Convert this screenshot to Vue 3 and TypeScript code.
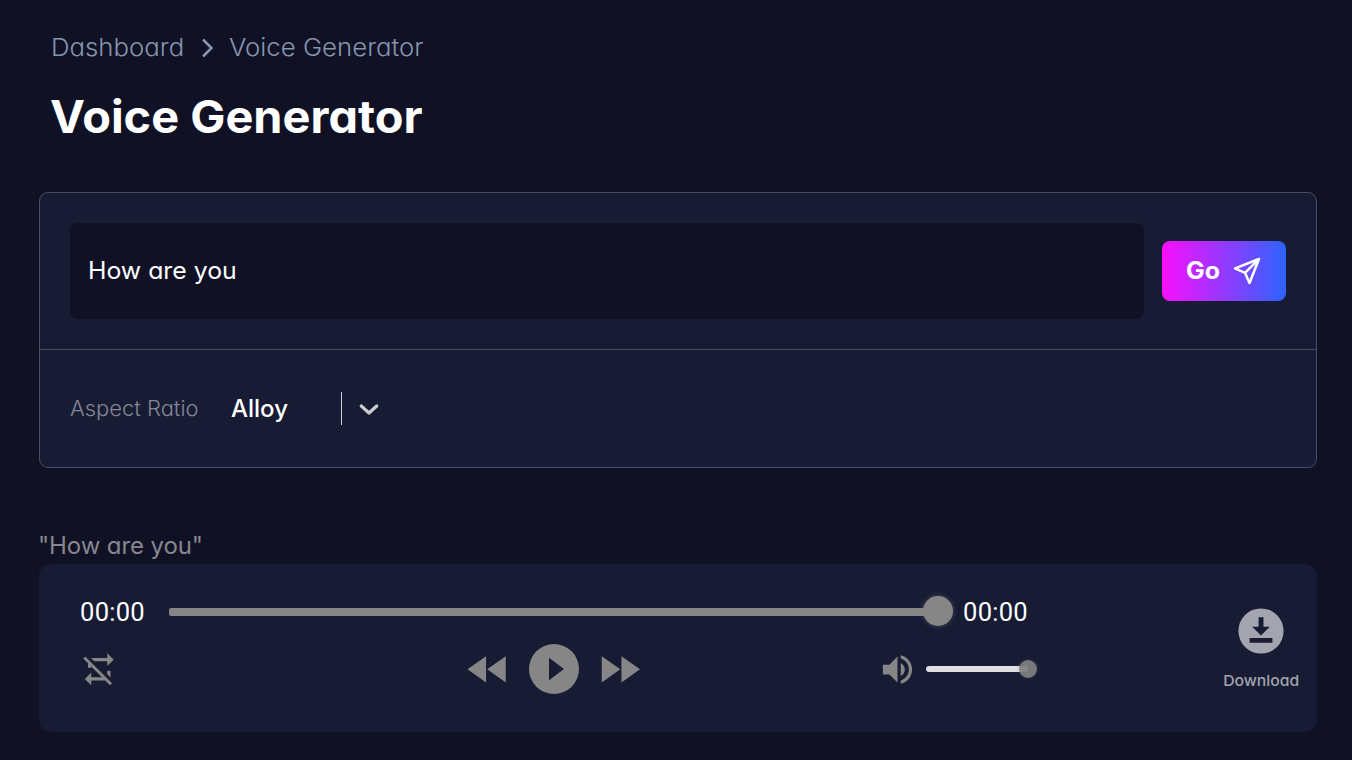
<script setup lang="ts">
import { ref } from 'vue'

const crumbs = ['Dashboard', 'Voice Generator']
const prompt = ref('How are you')
const voice = ref('Alloy')
const time = '00:00'
</script>

<template>
  <main class="page">
    <nav class="crumbs">
      <span class="crumb-first">{{ crumbs[0] }}</span>
      <svg class="crumb-arrow" width="14" height="22" viewBox="0 0 14 22"><path d="M2 2.5 10.5 11 2 19.5" /></svg>
      <span class="crumb-last">{{ crumbs[1] }}</span>
    </nav>
    <h1>Voice Generator</h1>

    <section class="panel">
      <div class="prompt-row">
        <div class="field"><span class="prompt">{{ prompt }}</span></div>
        <button class="go">
          <span>Go</span>
          <svg width="28" height="28" viewBox="0 0 28 28">
            <path d="M26 2 2 11.4l10 4.4L16.5 26 26 2ZM26 2 12 15.8" />
          </svg>
        </button>
      </div>
      <div class="options">
        <span class="label">Aspect Ratio</span>
        <span class="voice">{{ voice }}</span>
        <i class="divider"></i>
        <svg class="chevron" width="20" height="12" viewBox="0 0 20 12"><path d="M2.3 2 10 9 17.7 2" /></svg>
      </div>
    </section>

    <p class="quote">"{{ prompt }}"</p>

    <section class="result">
      <div class="player">
        <div class="seek">
          <span class="time">{{ time }}</span>
          <div class="track"><i class="knob"></i></div>
          <span class="time">{{ time }}</span>
        </div>
        <div class="controls">
          <svg class="loop" width="38.5" height="38.5" viewBox="0 0 24 24">
            <path d="M2,5.27L3.28,4L20,20.72L18.73,22L15.73,19H7V22L3,18L7,14V17H13.73L7,10.27V11H5V8.27L2,5.27M17,13H19V17.18L17,15.18V13M17,5V2L21,6L17,10V7H8.82L6.82,5H17Z" />
          </svg>
          <svg class="rewind" width="52.5" height="52.5" viewBox="0 0 24 24">
            <path d="M11.5,12L20,18V6M11,18V6L2.5,12L11,18Z" />
          </svg>
          <svg class="play" width="60" height="60" viewBox="0 0 24 24">
            <path fill-rule="evenodd" d="M12 2a10 10 0 1 0 0 20a10 10 0 1 0 0-20ZM10 7.5v9l6-4.5Z" />
          </svg>
          <svg class="forward" width="52.5" height="52.5" viewBox="0 0 24 24">
            <path d="M13,6V18L21.5,12M4,18L12.5,12L4,6V18Z" />
          </svg>
          <svg class="volume" width="39" height="39" viewBox="0 0 24 24">
            <path d="M14,3.23V5.29C16.89,6.15 19,8.83 19,12C19,15.17 16.89,17.84 14,18.7V20.77C18,19.86 21,16.28 21,12C21,7.72 18,4.14 14,3.23M16.5,12C16.5,10.23 15.5,8.71 14,7.97V16C15.5,15.29 16.5,13.76 16.5,12M3,9V15H7L12,20V4L7,9H3Z" />
          </svg>
          <div class="level"><i class="level-knob"></i></div>
        </div>
      </div>
      <div class="download">
        <svg width="46" height="46" viewBox="0 0 46 46">
          <circle cx="23" cy="23" r="22.6" />
          <path d="M20.6 9.2h4.9v9.6h6.3L23 27.4l-8.8-8.6h6.4ZM11.6 30h22.8v4.7H11.6Z" />
        </svg>
        <span>Download</span>
      </div>
    </section>
  </main>
</template>

<style>
body {
  margin: 0;
  background: #101125;
}
</style>

<style scoped>
.page {
  box-sizing: border-box;
  height: 760px;
  overflow: hidden;
  padding: 30px 35px 0 39px;
  background: #101125;
  color: #fff;
  font-family: Inter, "Open Sans", sans-serif;
  font-feature-settings: "cv11";
}
span { white-space: nowrap; }
svg { display: block; flex: none; }
.crumbs {
  display: flex;
  align-items: center;
  height: 35px;
  padding-left: 12px;
  font-size: 24px;
  font-weight: 300;
  color: #8696ae;
}
.crumb-first, .crumb-last {
  transform: scaleX(1.074);
  transform-origin: left;
}
.crumb-first { width: 150px; }
.crumb-last { margin-left: 14px; }
.crumb-arrow { margin-top: 1px; }
.crumb-arrow path { fill: none; stroke: #8696ae; stroke-width: 2.5; }
h1 {
  margin: 17px 0 0 11px;
  height: 70px;
  line-height: 70px;
  font-size: 45px;
  font-weight: 650;
  white-space: nowrap;
  transform: scaleX(1.042);
  transform-origin: left;
}
.panel {
  box-sizing: border-box;
  height: 276px;
  margin-top: 40px;
  border: 1px solid #464e61;
  border-radius: 9px;
  background: #171b34;
}
.prompt-row {
  display: flex;
  align-items: center;
  justify-content: space-between;
  height: 156px;
  padding: 0 30px;
  border-bottom: 1px solid #464e61;
}
.field {
  display: flex;
  align-items: center;
  box-sizing: border-box;
  width: 1074px;
  height: 96px;
  padding: 0 0 2px 18px;
  border-radius: 8px;
  background: #101125;
  font-size: 24px;
  font-weight: 420;
}
.prompt {
  transform: scaleX(1.034);
  transform-origin: left;
}
.go {
  display: flex;
  align-items: center;
  width: 124px;
  height: 60px;
  padding: 0 0 0 24px;
  border: 0;
  border-radius: 8px;
  background: linear-gradient(90deg, #fa0fff, #2d64ff);
  color: #fff;
  font: 700 24px Inter, sans-serif;
}
.go span {
  width: 47px;
  margin-top: -1px;
  text-align: left;
  transform: scaleX(1.04);
  transform-origin: left;
}
.go path { fill: none; stroke: #fff; stroke-width: 2.5; stroke-linejoin: round; }
.options {
  display: flex;
  align-items: center;
  height: 117px;
  padding-left: 30px;
}
.label {
  width: 161px;
  font-size: 21px;
  font-weight: 300;
  color: #858794;
  transform: scaleX(1.045);
  transform-origin: left;
}
.voice { width: 110px; font-size: 24px; font-weight: 500; }
.divider { width: 1px; height: 33px; background: #ccc; }
.chevron { margin: 2px 0 0 17px; }
.chevron path { fill: none; stroke: #ccc; stroke-width: 3.2; stroke-linecap: round; stroke-linejoin: round; }
.quote {
  margin: 60px 0 0 -1px;
  height: 36px;
  line-height: 36px;
  font-size: 24px;
  letter-spacing: -0.1px;
  color: #87878f;
}
.result {
  display: flex;
  height: 168px;
  border-radius: 12px;
  background: #171b34;
}
.player {
  box-sizing: border-box;
  width: 996px;
  height: 134px;
  margin: 17px 0 0 17px;
  padding: 13px 0 0 24px;
  border-radius: 3px;
  box-shadow: 0 0 3px rgba(0, 0, 0, 0.12);
}
.seek { display: flex; align-items: center; height: 36px; }
.time { width: 89px; margin-top: -1px; font-family: Roboto, sans-serif; font-size: 25.5px; font-weight: 430; letter-spacing: 0.3px; }
.track { position: relative; width: 769px; height: 8px; margin-right: 25px; border-radius: 2px; background: #868686; }
.knob {
  position: absolute;
  right: -15px;
  top: -12px;
  width: 30px;
  height: 30px;
  border-radius: 50%;
  background: #868686;
  box-shadow: 0 0 5px rgba(134, 134, 134, 0.5);
}
.controls { display: flex; align-items: center; height: 78px; }
.controls svg { fill: #868686; }
.rewind { margin-left: 343px; }
.play { margin-left: 9.5px; }
.forward { margin-left: 9px; }
.volume { margin-left: 232.5px; }
.level { position: relative; width: 102px; height: 6px; margin-left: 9px; border-radius: 3px; background: #e0e0e0; }
.level-knob {
  position: absolute;
  right: -9px;
  top: -6px;
  width: 18px;
  height: 18px;
  border-radius: 50%;
  background: rgba(128, 128, 128, 0.93);
  box-shadow: 0 0 4px rgba(134, 134, 134, 0.3);
}
.download {
  display: flex;
  flex-direction: column;
  align-items: center;
  width: 80px;
  margin: 44px 0 0 169px;
  gap: 18px;
  color: #a2a4ae;
  font-size: 15px;
  font-weight: 500;
  line-height: 18px;
}
.download span { transform: scaleX(1.05); }
.download circle { fill: #a2a4ae; }
.download path { fill: #171b34; }
</style>
